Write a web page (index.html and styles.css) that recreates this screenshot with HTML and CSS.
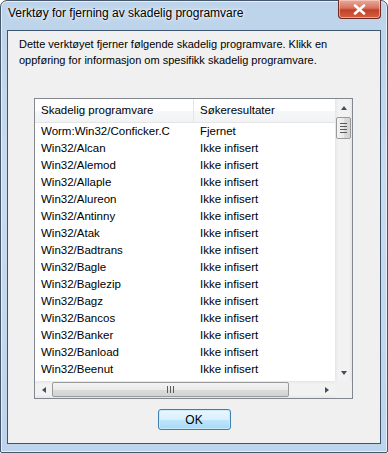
FILE: index.html
```html
<!DOCTYPE html>
<html lang="nb">
<head>
    <meta charset="UTF-8">
    <title>Verktøy for fjerning av skadelig programvare</title>
    <link rel="stylesheet" href="styles.css">
</head>
<body>
    <div class="window">
        <div class="titlebar">
            <span class="title">Verktøy for fjerning av skadelig programvare</span>
            <button class="close" type="button" aria-label="Lukk">
                <svg width="13" height="11" viewBox="0 0 13 11">
                    <path d="M2 1.5 L11 9.5 M11 1.5 L2 9.5" stroke="#fff" stroke-width="2.6" stroke-linecap="round"/>
                </svg>
            </button>
        </div>

        <div class="client">
            <p class="intro">Dette verktøyet fjerner følgende skadelig programvare. Klikk en oppføring for informasjon om spesifikk skadelig programvare.</p>

            <!-- Result list -->
            <div class="listbox">
                <div class="list-main">
                    <div class="list-content">
                        <div class="list-head">
                            <div class="col col-name">Skadelig programvare</div>
                            <div class="col col-result">Søkeresultater</div>
                        </div>
                        <div class="list-rows" id="rows"></div>
                    </div>
                    <div class="vscroll">
                        <div class="arrow-btn"><span class="tri tri-up"></span></div>
                        <div class="vthumb"><span></span><span></span><span></span><span></span></div>
                        <div class="vtrack"></div>
                        <div class="arrow-btn"><span class="tri tri-down"></span></div>
                    </div>
                </div>
                <div class="hscroll">
                    <div class="hbar">
                        <div class="arrow-btn h"><span class="tri tri-left"></span></div>
                        <div class="hthumb"><span></span><span></span><span></span></div>
                        <div class="htrack"></div>
                        <div class="arrow-btn h"><span class="tri tri-right"></span></div>
                    </div>
                    <div class="corner"></div>
                </div>
            </div>

            <div class="actions">
                <button class="btn" type="button">OK</button>
            </div>
        </div>
    </div>

    <script>
        var rows = [
            ["Worm:Win32/Conficker.C", "Fjernet"],
            ["Win32/Alcan", "Ikke infisert"],
            ["Win32/Alemod", "Ikke infisert"],
            ["Win32/Allaple", "Ikke infisert"],
            ["Win32/Alureon", "Ikke infisert"],
            ["Win32/Antinny", "Ikke infisert"],
            ["Win32/Atak", "Ikke infisert"],
            ["Win32/Badtrans", "Ikke infisert"],
            ["Win32/Bagle", "Ikke infisert"],
            ["Win32/Baglezip", "Ikke infisert"],
            ["Win32/Bagz", "Ikke infisert"],
            ["Win32/Bancos", "Ikke infisert"],
            ["Win32/Banker", "Ikke infisert"],
            ["Win32/Banload", "Ikke infisert"],
            ["Win32/Beenut", "Ikke infisert"]
        ];
        var list = document.getElementById("rows");
        rows.forEach(function (r) {
            var row = document.createElement("div");
            row.className = "row";
            row.innerHTML = '<div class="col col-name"></div><div class="col col-result"></div>';
            row.children[0].textContent = r[0];
            row.children[1].textContent = r[1];
            list.appendChild(row);
        });
    </script>
</body>
</html>
```

FILE: styles.css
```css
html, body {
    margin: 0;
    padding: 0;
}
body {
    font-family: "Liberation Sans", Arial, sans-serif;
    font-size: 12px;
    color: #000;
    background: #fff;
}
.window {
    width: 388px;
    height: 453px;
    box-sizing: border-box;
    border: 1px solid #46566b;
    border-radius: 7px 7px 2px 2px;
    background: linear-gradient(to bottom, #bcd3ea 0%, #c9dbef 40%, #bed4ec 100%);
    box-shadow: inset 0 0 0 1px #e6eef8;
    display: flex;
    flex-direction: column;
}
.titlebar {
    height: 29px;
    display: flex;
    justify-content: space-between;
    align-items: flex-start;
}
.title {
    padding: 5px 0 0 7px;
    font-size: 12px;
    text-shadow: 0 0 6px #fff, 0 0 3px #fff;
}
.close {
    width: 43px;
    height: 19px;
    margin: -1px 6px 0 0;
    padding: 0;
    border: 1px solid #6e2b26;
    border-top: none;
    border-radius: 0 0 4px 4px;
    background: linear-gradient(to bottom, #e9a99c 0%, #d7735f 45%, #c2412a 55%, #d5603f 100%);
    box-shadow: inset 0 0 0 1px rgba(255, 220, 210, 0.55);
    display: flex;
    align-items: center;
    justify-content: center;
}
.client {
    flex: 1;
    margin: 0 6px 8px 6px;
    border: 1px solid #3e5570;
    background: #f0f0f0;
    display: flex;
    flex-direction: column;
}
.intro {
    margin: 0;
    padding: 5px 10px 0 11px;
    font-size: 11px;
    line-height: 16px;
    height: 62px;
}
.listbox {
    margin-left: 26px;
    width: 317px;
    border: 1px solid #828790;
    background: #fff;
    font-size: 11.5px;
}
.list-main {
    display: flex;
    height: 282px;
}
.list-content {
    flex: 1;
    overflow: hidden;
}
.list-head {
    display: flex;
    height: 23px;
    border-bottom: 1px solid #e5e5e5;
    background: linear-gradient(to bottom, #ffffff 0%, #ffffff 50%, #f6f7f8 51%, #f2f3f5 100%);
}
.list-head .col {
    line-height: 23px;
}
.list-head .col-name {
    border-right: 1px solid #e2e5e9;
}
.col {
    white-space: nowrap;
    overflow: hidden;
    box-sizing: border-box;
}
.col-name {
    width: 159px;
    padding-left: 6px;
}
.col-result {
    flex: 1;
    padding-left: 6px;
}
.row {
    display: flex;
    height: 17px;
    line-height: 17px;
}
.vscroll {
    width: 17px;
    display: flex;
    flex-direction: column;
    background: linear-gradient(to right, #e6e6e6 0%, #f2f2f2 20%, #f2f2f2 80%, #e6e6e6 100%);
}
.arrow-btn {
    height: 17px;
    display: flex;
    align-items: center;
    justify-content: center;
}
.arrow-btn.h {
    width: 17px;
    height: 17px;
}
.vtrack, .htrack {
    flex: 1;
}
.tri {
    width: 0;
    height: 0;
    border-style: solid;
}
.tri-up {
    border-width: 0 3.5px 4px 3.5px;
    border-color: transparent transparent #3f4f60 transparent;
}
.tri-down {
    border-width: 4px 3.5px 0 3.5px;
    border-color: #3f4f60 transparent transparent transparent;
}
.tri-left {
    border-width: 3.5px 4px 3.5px 0;
    border-color: transparent #3f4f60 transparent transparent;
}
.tri-right {
    border-width: 3.5px 0 3.5px 4px;
    border-color: transparent transparent transparent #3f4f60;
}
.vthumb {
    height: 20px;
    margin: 1px 1px 0 1px;
    border: 1px solid #9a9a9a;
    border-radius: 2px;
    background: linear-gradient(to right, #f3f3f3 0%, #eaeaea 50%, #dcdcdc 51%, #d2d2d2 100%);
    display: flex;
    flex-direction: column;
    align-items: center;
    justify-content: center;
    gap: 2px;
}
.vthumb span {
    width: 7px;
    height: 1px;
    background: #5a5a5a;
}
.hscroll {
    display: flex;
    height: 17px;
}
.hbar {
    flex: 1;
    display: flex;
    background: linear-gradient(to bottom, #e6e6e6 0%, #f2f2f2 20%, #f2f2f2 80%, #e6e6e6 100%);
}
.hthumb {
    width: 237px;
    margin: 1px 0;
    box-sizing: border-box;
    border: 1px solid #9a9a9a;
    border-radius: 2px;
    background: linear-gradient(to bottom, #f3f3f3 0%, #eaeaea 50%, #dcdcdc 51%, #d2d2d2 100%);
    display: flex;
    align-items: center;
    justify-content: center;
    gap: 2px;
}
.hthumb span {
    width: 1px;
    height: 7px;
    background: #5a5a5a;
}
.corner {
    width: 17px;
    background: #f0f0f0;
}
.actions {
    display: flex;
    justify-content: center;
    padding-top: 10px;
}
.btn {
    width: 73px;
    height: 21px;
    padding: 0;
    font-family: "Liberation Sans", Arial, sans-serif;
    font-size: 12px;
    color: #000;
    border: 1px solid #3c7fb1;
    border-radius: 3px;
    background: linear-gradient(to bottom, #eaf6fd 0%, #d9f0fc 50%, #bee6fd 51%, #a7d9f5 100%);
    box-shadow: inset 0 0 0 1px #c8ecfd;
    cursor: pointer;
}
```
